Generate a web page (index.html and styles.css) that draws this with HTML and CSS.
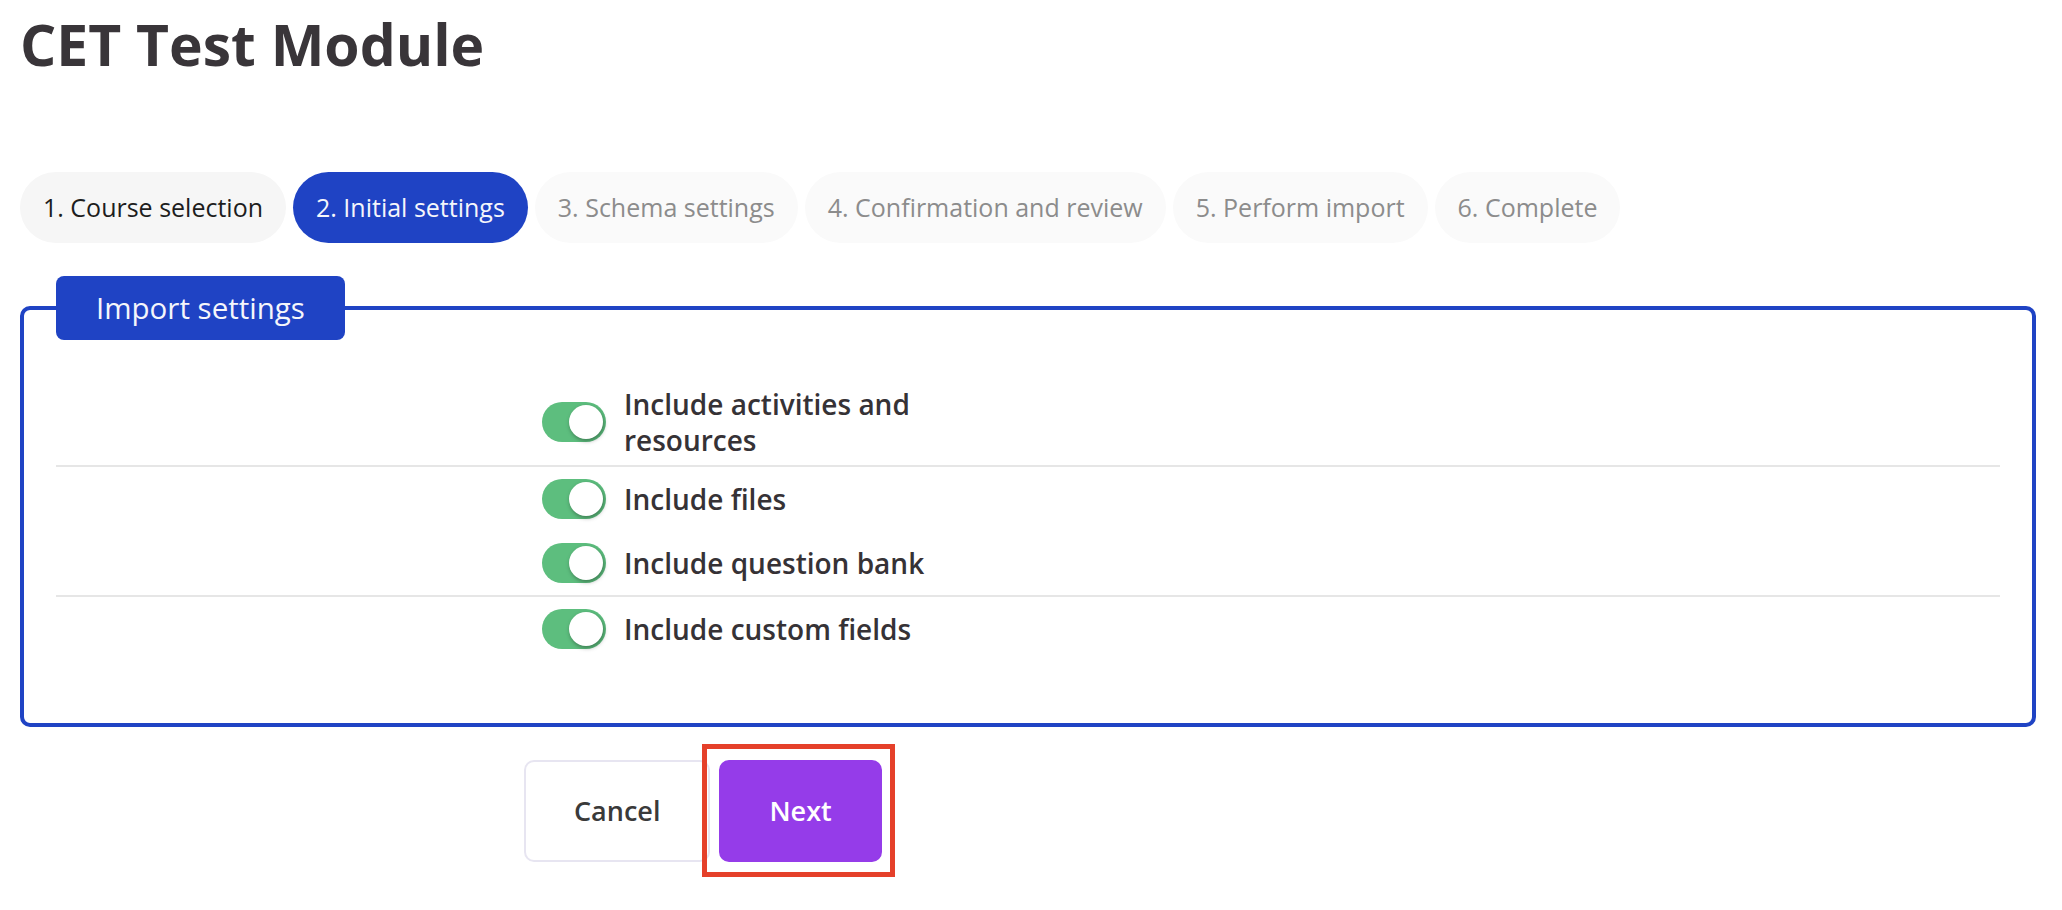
FILE: index.html
```html
<!DOCTYPE html>
<html lang="en">
<head>
<meta charset="utf-8">
<title>CET Test Module</title>
<link rel="stylesheet" href="styles.css">
</head>
<body>
<div class="page">
  <h1 class="title">CET Test Module</h1>
  <ol class="steps">
    <li class="step step-done">1. Course selection</li>
    <li class="step step-active">2. Initial settings</li>
    <li class="step">3. Schema settings</li>
    <li class="step">4. Confirmation and review</li>
    <li class="step">5. Perform import</li>
    <li class="step">6. Complete</li>
  </ol>
  <form class="import-form">
    <fieldset class="panel">
      <legend class="panel-title">Import settings</legend>
      <div class="opt sep opt-wrap">
        <span class="switch"><span class="knob"></span></span>
        <span class="opt-label">Include activities and resources</span>
      </div>
      <div class="opt">
        <span class="switch"><span class="knob"></span></span>
        <span class="opt-label">Include files</span>
      </div>
      <div class="opt sep">
        <span class="switch"><span class="knob"></span></span>
        <span class="opt-label">Include question bank</span>
      </div>
      <div class="opt">
        <span class="switch"><span class="knob"></span></span>
        <span class="opt-label">Include custom fields</span>
      </div>
    </fieldset>
    <div class="actions">
      <button type="button" class="btn btn-cancel">Cancel</button>
      <span class="highlight"><button type="button" class="btn btn-next">Next</button></span>
    </div>
  </form>
</div>
</body>
</html>
```

FILE: styles.css
```css
* {
  box-sizing: border-box;
}

html, body {
  margin: 0;
  padding: 0;
  background: #ffffff;
}

body {
  font-family: "Open Sans", "Noto Sans", "Liberation Sans", sans-serif;
  color: #333333;
}

.page {
  padding: 0 26px 40px 20px;
}

.title {
  margin: 8px 0 0;
  font-size: 57px;
  line-height: 72px;
  font-weight: 700;
  color: #393539;
}

.steps {
  list-style: none;
  margin: 92px 0 0;
  padding: 0;
  display: flex;
  gap: 7px;
}

.step {
  font-size: 25px;
  line-height: 39px;
  padding: 16px 23px;
  border-radius: 36px;
  background: #fafafa;
  color: #8c8c8c;
  white-space: nowrap;
}

.step-done {
  background: #f6f6f6;
  color: #1d1d1d;
}

.step-active {
  background: #1f43c4;
  color: #f5f6fb;
}

.import-form {
  margin: 33px 0 0;
}

.panel {
  margin: 0;
  min-width: 0;
  border: 4px solid #1f43c4;
  border-radius: 10px;
  padding: 33px 32px 62px;
}

.panel-title {
  margin: 0;
  padding: 12px 40px;
  font-size: 29.5px;
  line-height: 40px;
  font-weight: 400;
  color: #f5f6fb;
  background: #1f43c4;
  border-radius: 8px;
}

.opt {
  display: flex;
  align-items: center;
  gap: 18px;
  padding: 12px 0 12px 486px;
}

.opt.sep {
  border-bottom: 2px solid #e6e6e6;
}

.opt.opt-wrap {
  padding-top: 13px;
  padding-bottom: 7px;
}

.switch {
  flex: none;
  display: flex;
  align-items: center;
  justify-content: flex-end;
  width: 64px;
  height: 40px;
  padding: 0 3px;
  border-radius: 20px;
  background: #5dbe7e;
}

.knob {
  display: block;
  width: 34px;
  height: 34px;
  border-radius: 50%;
  background: #ffffff;
  box-shadow: 1px 2px 4px rgba(0, 0, 0, 0.35);
}

.opt-label {
  max-width: 340px;
  font-size: 28px;
  line-height: 36px;
  font-weight: 600;
  color: #363236;
}

.actions {
  display: flex;
  align-items: flex-start;
  gap: 9px;
  margin-top: 33px;
  padding-left: 504px;
}

.btn {
  font-family: "Open Sans", "Noto Sans", "Liberation Sans", sans-serif;
  font-size: 27px;
  line-height: 42px;
  font-weight: 600;
  padding: 28px 48px;
  border-radius: 10px;
  cursor: pointer;
}

.btn-cancel {
  background: #ffffff;
  border: 2px solid #e7e5f1;
  color: #3a3a3a;
}

.highlight {
  position: relative;
  display: block;
}

.highlight::after {
  content: "";
  position: absolute;
  top: -16px;
  right: -13px;
  bottom: -15px;
  left: -17px;
  border: 5px solid #e5402a;
  pointer-events: none;
}

.btn-next {
  display: block;
  background: #953ce9;
  border: 2px solid #953ce9;
  color: #ffffff;
}
```
